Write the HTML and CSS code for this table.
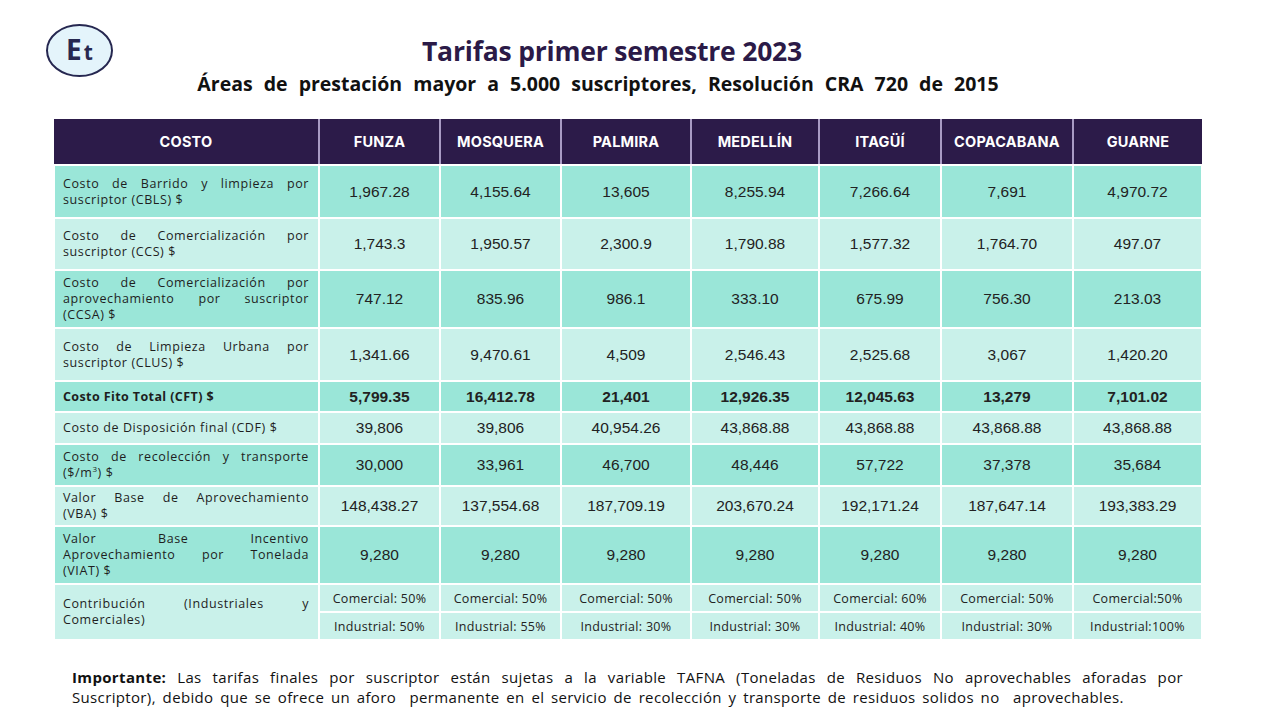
FILE: index.html
```html
<!DOCTYPE html>
<html lang="es">
<head>
<meta charset="utf-8">
<title>Tarifas primer semestre 2023</title>
<link rel="stylesheet" href="styles.css">
</head>
<body>
<div class="page">
  <header class="top">
    <div class="logo"><span class="logo-e">E</span><span class="logo-t">t</span></div>
    <div class="titles">
      <h1 class="title">Tarifas primer semestre 2023</h1>
      <h2 class="subtitle">Áreas de prestación mayor a 5.000 suscriptores, Resolución CRA 720 de 2015</h2>
    </div>
  </header>

  <table class="tarifas">
    <colgroup>
      <col class="c0"><col class="c1"><col class="c2"><col class="c3"><col class="c4"><col class="c5"><col class="c6"><col class="c7">
    </colgroup>
    <thead>
      <tr class="h">
        <th>COSTO</th><th>FUNZA</th><th>MOSQUERA</th><th>PALMIRA</th><th>MEDELLÍN</th><th>ITAGÜÍ</th><th>COPACABANA</th><th>GUARNE</th>
      </tr>
    </thead>
    <tbody>
      <tr class="dark r1">
        <td class="lab"><span class="jl">Costo de Barrido y limpieza por</span><span class="ll">suscriptor (CBLS) $</span></td>
        <td>1,967.28</td><td>4,155.64</td><td>13,605</td><td>8,255.94</td><td>7,266.64</td><td>7,691</td><td>4,970.72</td>
      </tr>
      <tr class="light r2">
        <td class="lab"><span class="jl">Costo de Comercialización por</span><span class="ll">suscriptor (CCS) $</span></td>
        <td>1,743.3</td><td>1,950.57</td><td>2,300.9</td><td>1,790.88</td><td>1,577.32</td><td>1,764.70</td><td>497.07</td>
      </tr>
      <tr class="dark r3">
        <td class="lab"><span class="jl">Costo de Comercialización por</span><span class="jl">aprovechamiento por suscriptor</span><span class="ll">(CCSA) $</span></td>
        <td>747.12</td><td>835.96</td><td>986.1</td><td>333.10</td><td>675.99</td><td>756.30</td><td>213.03</td>
      </tr>
      <tr class="light r4">
        <td class="lab"><span class="jl">Costo de Limpieza Urbana por</span><span class="ll">suscriptor (CLUS) $</span></td>
        <td>1,341.66</td><td>9,470.61</td><td>4,509</td><td>2,546.43</td><td>2,525.68</td><td>3,067</td><td>1,420.20</td>
      </tr>
      <tr class="dark r5 total">
        <td class="lab"><span class="ll">Costo Fito Total (CFT) $</span></td>
        <td>5,799.35</td><td>16,412.78</td><td>21,401</td><td>12,926.35</td><td>12,045.63</td><td>13,279</td><td>7,101.02</td>
      </tr>
      <tr class="light r6">
        <td class="lab"><span class="ll">Costo de Disposición final (CDF) $</span></td>
        <td>39,806</td><td>39,806</td><td>40,954.26</td><td>43,868.88</td><td>43,868.88</td><td>43,868.88</td><td>43,868.88</td>
      </tr>
      <tr class="dark r7">
        <td class="lab"><span class="jl">Costo de recolección y transporte</span><span class="ll">($/m<sup>3</sup>) $</span></td>
        <td>30,000</td><td>33,961</td><td>46,700</td><td>48,446</td><td>57,722</td><td>37,378</td><td>35,684</td>
      </tr>
      <tr class="light r8">
        <td class="lab"><span class="jl">Valor Base de Aprovechamiento</span><span class="ll">(VBA) $</span></td>
        <td>148,438.27</td><td>137,554.68</td><td>187,709.19</td><td>203,670.24</td><td>192,171.24</td><td>187,647.14</td><td>193,383.29</td>
      </tr>
      <tr class="dark r9">
        <td class="lab"><span class="jl">Valor Base Incentivo</span><span class="jl">Aprovechamiento por Tonelada</span><span class="ll">(VIAT) $</span></td>
        <td>9,280</td><td>9,280</td><td>9,280</td><td>9,280</td><td>9,280</td><td>9,280</td><td>9,280</td>
      </tr>
      <tr class="light r10">
        <td class="lab" rowspan="2"><span class="jl">Contribución (Industriales y</span><span class="ll">Comerciales)</span></td>
        <td class="sm">Comercial: 50%</td><td class="sm">Comercial: 50%</td><td class="sm">Comercial: 50%</td><td class="sm">Comercial: 50%</td><td class="sm">Comercial: 60%</td><td class="sm">Comercial: 50%</td><td class="sm">Comercial:50%</td>
      </tr>
      <tr class="light r11">
        <td class="sm">Industrial: 50%</td><td class="sm">Industrial: 55%</td><td class="sm">Industrial: 30%</td><td class="sm">Industrial: 30%</td><td class="sm">Industrial: 40%</td><td class="sm">Industrial: 30%</td><td class="sm">Industrial:100%</td>
      </tr>
    </tbody>
  </table>

  <p class="note"><span class="jl"><b>Importante:</b> Las tarifas finales por suscriptor están sujetas a la variable TAFNA (Toneladas de Residuos No aprovechables aforadas por</span><span class="ll">Suscriptor), debido que se ofrece un aforo&nbsp; permanente en el servicio de recolección y transporte de residuos solidos no&nbsp; aprovechables.</span></p>
</div>
</body>
</html>
```

FILE: styles.css
```css
* { box-sizing: border-box; }
html, body { margin: 0; padding: 0; background: #ffffff; }
body { width: 1280px; height: 720px; overflow: hidden; font-family: "Open Sans", "Noto Sans", sans-serif; color: #1f1f1f; }

.page { padding: 0 0 0 53px; }

.top { display: flex; align-items: flex-start; height: 119px; position: relative; }

.logo {
  position: absolute; left: -7px; top: 24px;
  width: 67px; height: 53px; border-radius: 50%;
  border: 2px solid #262750; background: #e4f4fb;
  display: flex; align-items: baseline; justify-content: center;
  padding-top: 7px; color: #262750; font-family: "Open Sans", sans-serif; font-weight: 700;
}
.logo-e { font-size: 28px; line-height: 32px; }
.logo-t { font-size: 21px; line-height: 32px; margin-left: 2px; font-weight: 700; }

.titles { width: 1148px; display: flex; flex-direction: column; align-items: center; }
.title {
  margin: 35px 30px 0 0; font-size: 26.5px; line-height: 32px; font-weight: 700;
  color: #2b1a47; font-family: "Open Sans", sans-serif; letter-spacing: -0.2px;
}
.subtitle {
  margin: 5px 58px 0 0; font-size: 19.5px; line-height: 24px; font-weight: 700;
  color: #111111; word-spacing: 6px; font-family: "Open Sans", sans-serif;
}

.tarifas { border-collapse: collapse; width: 1148px; table-layout: fixed; }
col.c0 { width: 265px; } col.c1 { width: 121px; } col.c2 { width: 121px; } col.c3 { width: 130px; }
col.c4 { width: 128px; } col.c5 { width: 122px; } col.c6 { width: 132px; } col.c7 { width: 129px; }

.tarifas th {
  background: #2c1b49; color: #ffffff; font-weight: 700; font-size: 14.5px;
  font-family: "Inter", "Lato", sans-serif; letter-spacing: 0.2px;
  height: 46px; border-left: 2px solid #a99bc4; border-right: 2px solid #a99bc4; border-bottom: 2px solid #ffffff;
  text-align: center; padding: 0;
}
.tarifas th:first-child { border-left: none; }
.tarifas th:last-child { border-right: none; }

.tarifas td {
  border: 2px solid #ffffff; text-align: center; padding: 0 2px;
  font-family: "Liberation Sans", Arial, sans-serif; font-size: 15.5px; color: #222222;
}
.dark td { background: #9ae6d8; }
.light td { background: #c9f1ea; }

.tarifas td.lab {
  text-align: left; padding: 0 9px 0 8px; font-family: "Open Sans", "Noto Sans", sans-serif;
  font-size: 12.5px; line-height: 16px; color: #1e1e1e; letter-spacing: 0.6px;
}
.lab .jl { display: block; text-align: justify; text-align-last: justify; white-space: nowrap; }
.lab .ll { display: block; white-space: nowrap; }

.tarifas td.sm { font-family: "Open Sans", sans-serif; font-size: 12.5px; color: #222; letter-spacing: 0.3px; }

.total td { font-weight: 700; }
.total td.lab { font-weight: 700; letter-spacing: 0.4px; }

.r1 td { height: 53px; }
.r2 td { height: 52px; }
.r3 td { height: 58px; }
.r4 td { height: 53px; }
.r5 td { height: 31px; }
.r6 td { height: 32px; }
.r7 td { height: 42px; }
.r8 td { height: 40px; }
.r9 td { height: 58px; }
.r10 td { height: 28px; }
.r11 td { height: 28px; }
.r10 td.lab { height: 56px; }

sup { font-size: 8px; line-height: 0; }

.note {
  width: 1111px; margin: 26px 0 0 19px; font-size: 15px; line-height: 20px;
  font-family: "Open Sans", sans-serif; color: #111; letter-spacing: 0.35px;
}
.note .jl { display: block; text-align: justify; text-align-last: justify; }
.note .ll { display: block; word-spacing: 2.5px; }
```
